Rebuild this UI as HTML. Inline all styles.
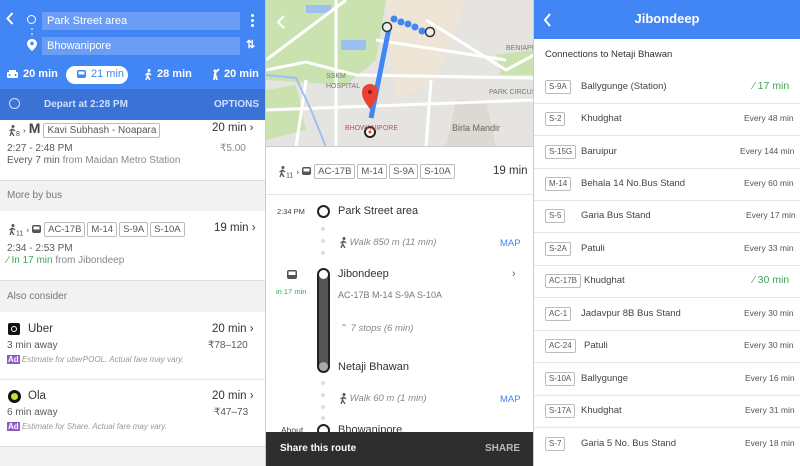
<!DOCTYPE html>
<html><head><meta charset="utf-8">
<style>
*{margin:0;padding:0;box-sizing:border-box}
body{width:800px;height:466px;overflow:hidden;font-family:"Liberation Sans",sans-serif;background:#fff;position:relative;color:#222}
.a{position:absolute;white-space:nowrap}
.tag{display:inline-block;border:1px solid #bbb;border-radius:2px;font-size:9.5px;color:#555;padding:1px 3px;line-height:11px;margin-right:2px;vertical-align:middle}
.tw{font-size:0;line-height:0}
.tw .tag{font-size:8px;padding:1px 3px;line-height:10px}
.g{color:#5a5a5a}
.gray{background:#f2f2f2}
.sep{position:absolute;height:1px;background:#e6e6e6}
.ic{display:inline-block;vertical-align:middle}
</style></head><body>

<!-- LEFT PANEL -->
<div class="a" style="left:0;top:0;width:266px;height:89px;background:#4285f4"></div>
<div class="a" style="left:0;top:89px;width:266px;height:31px;background:#3a72d6"></div>
<svg class="a" style="left:6px;top:12px" width="8" height="13"><path d="M6.5 1 1.5 6.5 6.5 12" stroke="#fff" stroke-width="2" fill="none"/></svg>
<div class="a" style="left:27px;top:15px;width:9px;height:9px;border:1.5px solid #fff;border-radius:50%"></div>
<div class="a" style="left:31px;top:28px;width:2px;height:2px;background:#cde;border-radius:50%"></div>
<div class="a" style="left:31px;top:33px;width:2px;height:2px;background:#cde;border-radius:50%"></div>
<svg class="a" style="left:27px;top:39px" width="10" height="12"><path d="M5 0C2 0 0 2 0 5c0 3 5 7 5 7s5-4 5-7C10 2 8 0 5 0z" fill="#fff"/><circle cx="5" cy="4.5" r="1.7" fill="#4285f4"/></svg>
<div class="a" style="left:42px;top:12px;width:198px;height:18px;background:#6a9ef6;color:#fff;font-size:11px;padding:3px 5px">Park Street area</div>
<div class="a" style="left:42px;top:37px;width:198px;height:18px;background:#6a9ef6;color:#fff;font-size:11px;padding:3px 5px">Bhowanipore</div>
<div class="a" style="left:251px;top:14px;width:3px;height:3px;background:#fff;border-radius:50%;box-shadow:0 5px 0 #fff,0 10px 0 #fff"></div>
<div class="a" style="left:246px;top:38px;color:#fff;font-size:11px;font-weight:bold">⇅</div>
<svg class="a" style="left:7px;top:70px" width="11" height="9"><rect x="0" y="2" width="11" height="6" rx="1" fill="#fff"/><rect x="2" y="0" width="7" height="3" fill="#fff"/><circle cx="2.5" cy="5" r="1" fill="#4285f4"/><circle cx="8.5" cy="5" r="1" fill="#4285f4"/></svg>
<div class="a" style="left:23px;top:68px;color:#fff;font-size:11px;font-weight:bold">20 min</div>
<div class="a" style="left:66px;top:66px;width:62px;height:18px;background:#fff;border-radius:9px"></div>
<svg class="a" style="left:77px;top:70px" width="9" height="10"><rect x="0" y="0" width="9" height="8" rx="2" fill="#4285f4"/><rect x="1.5" y="1.5" width="6" height="3" fill="#fff"/></svg>
<div class="a" style="left:91px;top:68px;color:#4285f4;font-size:11px">21 min</div>
<svg class="a" style="left:144px;top:69px" width="8" height="11"><circle cx="5" cy="1.5" r="1.5" fill="#fff"/><path d="M4.5 3.5 3.5 7 M3.5 7 2 11 M3.5 7 6 11 M4.5 4 7 6 M4.5 4 1.5 6" stroke="#fff" stroke-width="1.5" fill="none"/></svg>
<div class="a" style="left:157px;top:68px;color:#fff;font-size:11px;font-weight:bold">28 min</div>
<svg class="a" style="left:211px;top:68px" width="9" height="12"><circle cx="4" cy="3" r="1.5" fill="#fff"/><path d="M4 5 3 12 M4 5 6 12 M4 5 8 1" stroke="#fff" stroke-width="1.8" fill="none"/></svg>
<div class="a" style="left:224px;top:68px;color:#fff;font-size:11px;font-weight:bold">20 min</div>
<div class="a" style="left:9px;top:98px;width:11px;height:11px;border:1.5px solid #cfe0ff;border-radius:50%"></div>
<div class="a" style="left:44px;top:99px;color:#cfe0ff;font-size:10px;font-weight:bold">Depart at 2:28 PM</div>
<div class="a" style="left:214px;top:99px;color:#cfe0ff;font-size:10px;font-weight:bold">OPTIONS</div>

<div class="a" style="left:8px;top:121px;font-size:11px;color:#444;line-height:14px"><svg class="ic" width="8" height="11"><circle cx="5" cy="1.5" r="1.5" fill="#555"/><path d="M4.5 3.5 3.5 7 M3.5 7 2 11 M3.5 7 6 11 M4.5 4 7 6 M4.5 4 1.5 6" stroke="#555" stroke-width="1.3" fill="none"/></svg><sub style="font-size:7px">8</sub> <span style="font-size:8px">›</span> <b style="font-size:14px">M</b> <span class="tag" style="font-size:10px">Kavi Subhash - Noapara</span></div>
<div class="a" style="left:212px;top:122px;font-size:11.5px;color:#333">20 min <span style="font-size:11px">›</span></div>
<div class="a g" style="left:7px;top:143px;font-size:10px">2:27 - 2:48 PM</div>
<div class="a" style="left:220px;top:143px;font-size:10px;color:#888">₹5.00</div>
<div class="a g" style="left:7px;top:155px;font-size:10px">Every 7 min <span style="color:#888">from Maidan Metro Station</span></div>
<div class="a gray" style="left:0;top:180px;width:266px;height:31px;border-top:1px solid #ddd"></div>
<div class="a" style="left:7px;top:190px;font-size:10px;color:#777">More by bus</div>
<div class="a" style="left:8px;top:222px;font-size:11px;color:#444;line-height:14px"><svg class="ic" width="8" height="11"><circle cx="5" cy="1.5" r="1.5" fill="#555"/><path d="M4.5 3.5 3.5 7 M3.5 7 2 11 M3.5 7 6 11 M4.5 4 7 6 M4.5 4 1.5 6" stroke="#555" stroke-width="1.3" fill="none"/></svg><sub style="font-size:7px">11</sub> <span style="font-size:8px">›</span> <svg class="ic" width="9" height="10"><rect x="0" y="0" width="9" height="8" rx="2" fill="#555"/><rect x="1.5" y="1.5" width="6" height="3" fill="#fff"/></svg> <span class="tag">AC-17B</span><span class="tag">M-14</span><span class="tag">S-9A</span><span class="tag">S-10A</span></div>
<div class="a" style="left:214px;top:222px;font-size:11.5px;color:#333">19 min <span>›</span></div>
<div class="a g" style="left:7px;top:243px;font-size:10px">2:34 - 2:53 PM</div>
<div class="a" style="left:7px;top:255px;font-size:10px;color:#3aa757">⁄ In 17 min <span style="color:#888">from Jibondeep</span></div>
<div class="a gray" style="left:0;top:280px;width:266px;height:32px;border-top:1px solid #ddd"></div>
<div class="a" style="left:7px;top:291px;font-size:10px;color:#777">Also consider</div>
<div class="a" style="left:8px;top:323px;width:12px;height:12px;background:#111;border-radius:2px"><div style="margin:3px;width:6px;height:6px;border:1.5px solid #fff;border-radius:50%"></div></div>
<div class="a" style="left:28px;top:323px;font-size:11.5px;color:#333">Uber</div>
<div class="a" style="left:212px;top:323px;font-size:11.5px;color:#333">20 min <span>›</span></div>
<div class="a g" style="left:7px;top:340px;font-size:10px">3 min away</div>
<div class="a g" style="left:208px;top:340px;font-size:10px">₹78–120</div>
<div class="a" style="left:7px;top:355px;font-size:8px;color:#999;font-style:italic"><span style="background:#8e5cc5;color:#fff;font-style:normal;font-weight:bold;padding:0 1px">Ad</span> Estimate for uberPOOL. Actual fare may vary.</div>
<div class="sep" style="left:0;top:379px;width:266px"></div>
<div class="a" style="left:8px;top:390px;width:13px;height:13px;background:#111;border-radius:50%"><div style="margin:3px;width:7px;height:7px;background:#cddc39;border-radius:50%"></div></div>
<div class="a" style="left:28px;top:390px;font-size:11.5px;color:#333">Ola</div>
<div class="a" style="left:212px;top:390px;font-size:11.5px;color:#333">20 min <span>›</span></div>
<div class="a g" style="left:7px;top:407px;font-size:10px">6 min away</div>
<div class="a g" style="left:214px;top:407px;font-size:10px">₹47–73</div>
<div class="a" style="left:7px;top:422px;font-size:8px;color:#999;font-style:italic"><span style="background:#8e5cc5;color:#fff;font-style:normal;font-weight:bold;padding:0 1px">Ad</span> Estimate for Share. Actual fare may vary.</div>
<div class="a gray" style="left:0;top:446px;width:266px;height:20px;border-top:1px solid #ddd"></div>
<div class="a" style="left:265px;top:0;width:1px;height:466px;background:#ccc"></div>

<!-- MIDDLE PANEL -->
<svg class="a" style="left:266px;top:0" width="268" height="147">
<rect width="268" height="147" fill="#e6e4e0"/>
<path d="M0 0H120L110 60 80 85 0 80Z" fill="#c9e2b0"/>
<path d="M0 90 30 85 40 130 0 140Z" fill="#c9e2b0"/>
<path d="M230 55 268 50 268 75 235 75Z" fill="#c9e2b0"/>
<path d="M120 0H200L170 80 130 100Z" fill="#f4e6d0" opacity=".6"/>
<path d="M190 100 220 100 230 147 180 147Z" fill="#dcd8d2"/>
<rect x="75" y="40" width="25" height="10" fill="#9cc0f0"/>
<rect x="40" y="5" width="25" height="8" fill="#9cc0f0"/>
<g stroke="#fff" stroke-width="3" fill="none">
<path d="M0 60 80 0"/><path d="M0 70 40 62 90 75 268 78"/><path d="M70 0 70 147"/><path d="M0 110 268 100"/><path d="M160 20 240 70 268 55"/><path d="M165 80 160 147"/><path d="M110 40 240 60"/><path d="M40 80 30 147"/>
</g>
<path d="M0 75 30 78 45 110 60 147" stroke="#9cc0f0" stroke-width="2" fill="none"/>
<path d="M123 28 105 118" stroke="#4285f4" stroke-width="5"/>
<g fill="#4285f4"><circle cx="128" cy="19" r="3.5"/><circle cx="135" cy="22" r="3.5"/><circle cx="142" cy="24" r="3.5"/><circle cx="149" cy="27" r="3.5"/><circle cx="156" cy="31" r="3.5"/></g>
<circle cx="121" cy="27" r="4.5" fill="#eee" stroke="#333" stroke-width="1.5"/>
<circle cx="164" cy="32" r="4.5" fill="#eee" stroke="#333" stroke-width="1.5"/>
<path d="M104 109C97 100 96 96 96 92 96 87 100 84 104 84 108 84 112 87 112 92 112 96 111 100 104 109Z" fill="#e94235"/>
<circle cx="104" cy="92" r="2" fill="#8b1a10"/>
<circle cx="104" cy="132" r="5" fill="#fff" stroke="#222" stroke-width="2"/><circle cx="104" cy="132" r="1.5" fill="#e94235"/>
<text x="60" y="78" font-size="7" fill="#777" font-family="Liberation Sans">SSKM</text>
<text x="60" y="88" font-size="7" fill="#777" font-family="Liberation Sans">HOSPITAL</text>
<text x="79" y="130" font-size="7" fill="#b55" font-family="Liberation Sans">BHOWANIPORE</text>
<text x="186" y="131" font-size="9" fill="#666" font-family="Liberation Sans">Birla Mandir</text>
<text x="223" y="94" font-size="7" fill="#777" font-family="Liberation Sans">PARK CIRCUS</text>
<text x="240" y="50" font-size="7" fill="#777" font-family="Liberation Sans">BENIAPU</text>
<path d="M18 16 12 22 18 28" stroke="#fff" stroke-width="2" fill="none"/>
</svg>
<div class="a" style="left:266px;top:146px;width:268px;height:1px;background:#ccc"></div>
<div class="a" style="left:278px;top:164px;font-size:11px;color:#444;line-height:14px"><svg class="ic" width="8" height="11"><circle cx="5" cy="1.5" r="1.5" fill="#555"/><path d="M4.5 3.5 3.5 7 M3.5 7 2 11 M3.5 7 6 11 M4.5 4 7 6 M4.5 4 1.5 6" stroke="#555" stroke-width="1.3" fill="none"/></svg><sub style="font-size:7px">11</sub> <span style="font-size:8px">›</span> <svg class="ic" width="9" height="10"><rect x="0" y="0" width="9" height="8" rx="2" fill="#555"/><rect x="1.5" y="1.5" width="6" height="3" fill="#fff"/></svg> <span class="tag">AC-17B</span><span class="tag">M-14</span><span class="tag">S-9A</span><span class="tag">S-10A</span></div>
<div class="a" style="left:493px;top:165px;font-size:11.5px;color:#333">19 min</div>
<div class="sep" style="left:266px;top:194px;width:268px"></div>
<div class="a" style="left:277px;top:207px;font-size:7.5px;color:#444">2:34 PM</div>
<div class="a" style="left:317px;top:205px;width:13px;height:13px;border:2.5px solid #222;border-radius:50%"></div>
<div class="a" style="left:338px;top:205px;font-size:11px;color:#333">Park Street area</div>
<div class="a" style="left:321px;top:227px;width:4px;height:4px;background:#ddd;border-radius:50%;box-shadow:0 12px 0 #ddd,0 24px 0 #ddd"></div>
<div class="a" style="left:339px;top:237px;font-size:9.5px;color:#888;font-style:italic"><svg class="ic" width="8" height="11"><circle cx="5" cy="1.5" r="1.5" fill="#555"/><path d="M4.5 3.5 3.5 7 M3.5 7 2 11 M3.5 7 6 11 M4.5 4 7 6 M4.5 4 1.5 6" stroke="#555" stroke-width="1.3" fill="none"/></svg> Walk 850 m (11 min)</div>
<div class="a" style="left:500px;top:238px;font-size:9.5px;color:#4285f4">MAP</div>
<svg class="a" style="left:287px;top:270px" width="10" height="11"><rect x="0" y="0" width="10" height="9" rx="2" fill="#555"/><rect x="1.5" y="1.5" width="7" height="3.5" fill="#fff"/></svg>
<div class="a" style="left:276px;top:287px;font-size:7.5px;color:#3aa757">in 17 min</div>
<div class="a" style="left:317px;top:268px;width:13px;height:105px;background:#555;border:2px solid #222;border-radius:7px"></div>
<div class="a" style="left:319px;top:270px;width:9px;height:9px;background:#fff;border-radius:50%"></div>
<div class="a" style="left:319px;top:362px;width:9px;height:9px;background:#aaa;border-radius:50%"></div>
<div class="a" style="left:338px;top:268px;font-size:11px;color:#333">Jibondeep</div>
<div class="a" style="left:512px;top:268px;font-size:11px;color:#666">›</div>
<div class="a" style="left:338px;top:290px;font-size:9px;color:#777">AC-17B M-14 S-9A S-10A</div>
<div class="a" style="left:340px;top:323px;font-size:9.5px;color:#888;font-style:italic"><span style="font-style:normal">⌃</span> 7 stops (6 min)</div>
<div class="a" style="left:338px;top:361px;font-size:11px;color:#333">Netaji Bhawan</div>
<div class="a" style="left:321px;top:381px;width:4px;height:4px;background:#ddd;border-radius:50%;box-shadow:0 12px 0 #ddd,0 24px 0 #ddd,0 35px 0 #ddd"></div>
<div class="a" style="left:339px;top:393px;font-size:9.5px;color:#888;font-style:italic"><svg class="ic" width="8" height="11"><circle cx="5" cy="1.5" r="1.5" fill="#555"/><path d="M4.5 3.5 3.5 7 M3.5 7 2 11 M3.5 7 6 11 M4.5 4 7 6 M4.5 4 1.5 6" stroke="#555" stroke-width="1.3" fill="none"/></svg> Walk 60 m (1 min)</div>
<div class="a" style="left:500px;top:394px;font-size:9.5px;color:#4285f4">MAP</div>
<div class="a" style="left:281px;top:425px;font-size:8.5px;color:#444">About</div>
<div class="a" style="left:317px;top:424px;width:13px;height:13px;border:2.5px solid #222;border-radius:50%"></div>
<div class="a" style="left:338px;top:424px;font-size:11px;color:#333">Bhowanipore</div>
<div class="a" style="left:266px;top:432px;width:268px;height:34px;background:#2e2e2e"></div>
<div class="a" style="left:280px;top:443px;font-size:10px;color:#fff;font-weight:bold">Share this route</div>
<div class="a" style="left:485px;top:443px;font-size:10px;color:#bbb;font-weight:bold">SHARE</div>
<div class="a" style="left:533px;top:0;width:1px;height:466px;background:#ccc"></div>

<!-- RIGHT PANEL -->
<div class="a" style="left:534px;top:0;width:266px;height:39px;background:#4285f4"></div>
<svg class="a" style="left:543px;top:13px" width="9" height="14"><path d="M7 1 2 7 7 13" stroke="#fff" stroke-width="2" fill="none"/></svg>
<div class="a" style="left:534px;top:11px;width:266px;text-align:center;color:#fff;font-size:13px;font-weight:bold">Jibondeep</div>
<div class="a" style="left:545px;top:49px;font-size:9.5px;color:#333">Connections to Netaji Bhawan</div>

<div class="a tw" style="left:545px;top:80px"><span class="tag">S-9A</span></div><div class="a" style="left:581px;top:81px;font-size:9.5px;color:#444">Ballygunge (Station)</div><div class="a" style="left:753px;top:80px;font-size:10.5px;color:#3aa757">⁄ 17 min</div><div class="sep" style="left:534px;top:103px;width:266px"></div>
<div class="a tw" style="left:545px;top:112px"><span class="tag">S-2</span></div><div class="a" style="left:581px;top:113px;font-size:9.5px;color:#444">Khudghat</div><div class="a" style="left:744px;top:113px;font-size:8.5px;color:#555">Every 48 min</div><div class="sep" style="left:534px;top:135px;width:266px"></div>
<div class="a tw" style="left:545px;top:145px"><span class="tag">S-15G</span></div><div class="a" style="left:581px;top:146px;font-size:9.5px;color:#444">Baruipur</div><div class="a" style="left:740px;top:146px;font-size:8.5px;color:#555">Every 144 min</div><div class="sep" style="left:534px;top:168px;width:266px"></div>
<div class="a tw" style="left:545px;top:177px"><span class="tag">M-14</span></div><div class="a" style="left:581px;top:178px;font-size:9.5px;color:#444">Behala 14 No.Bus Stand</div><div class="a" style="left:744px;top:178px;font-size:8.5px;color:#555">Every 60 min</div><div class="sep" style="left:534px;top:200px;width:266px"></div>
<div class="a tw" style="left:545px;top:209px"><span class="tag">S-5</span></div><div class="a" style="left:581px;top:210px;font-size:9.5px;color:#444">Garia Bus Stand</div><div class="a" style="left:746px;top:210px;font-size:8.5px;color:#555">Every 17 min</div><div class="sep" style="left:534px;top:232px;width:266px"></div>
<div class="a tw" style="left:545px;top:242px"><span class="tag">S-2A</span></div><div class="a" style="left:581px;top:243px;font-size:9.5px;color:#444">Patuli</div><div class="a" style="left:744px;top:243px;font-size:8.5px;color:#555">Every 33 min</div><div class="sep" style="left:534px;top:265px;width:266px"></div>
<div class="a tw" style="left:545px;top:274px"><span class="tag">AC-17B</span></div><div class="a" style="left:584px;top:275px;font-size:9.5px;color:#444">Khudghat</div><div class="a" style="left:753px;top:274px;font-size:10.5px;color:#3aa757">⁄ 30 min</div><div class="sep" style="left:534px;top:297px;width:266px"></div>
<div class="a tw" style="left:545px;top:307px"><span class="tag">AC-1</span></div><div class="a" style="left:581px;top:308px;font-size:9.5px;color:#444">Jadavpur 8B Bus Stand</div><div class="a" style="left:744px;top:308px;font-size:8.5px;color:#555">Every 30 min</div><div class="sep" style="left:534px;top:330px;width:266px"></div>
<div class="a tw" style="left:545px;top:339px"><span class="tag">AC-24</span></div><div class="a" style="left:584px;top:340px;font-size:9.5px;color:#444">Patuli</div><div class="a" style="left:744px;top:340px;font-size:8.5px;color:#555">Every 30 min</div><div class="sep" style="left:534px;top:362px;width:266px"></div>
<div class="a tw" style="left:545px;top:372px"><span class="tag">S-10A</span></div><div class="a" style="left:581px;top:373px;font-size:9.5px;color:#444">Ballygunge</div><div class="a" style="left:745px;top:373px;font-size:8.5px;color:#555">Every 16 min</div><div class="sep" style="left:534px;top:395px;width:266px"></div>
<div class="a tw" style="left:545px;top:404px"><span class="tag">S-17A</span></div><div class="a" style="left:581px;top:405px;font-size:9.5px;color:#444">Khudghat</div><div class="a" style="left:745px;top:405px;font-size:8.5px;color:#555">Every 31 min</div><div class="sep" style="left:534px;top:427px;width:266px"></div>
<div class="a tw" style="left:545px;top:437px"><span class="tag">S-7</span></div><div class="a" style="left:581px;top:438px;font-size:9.5px;color:#444">Garia 5 No. Bus Stand</div><div class="a" style="left:745px;top:438px;font-size:8.5px;color:#555">Every 18 min</div>
</body></html>
